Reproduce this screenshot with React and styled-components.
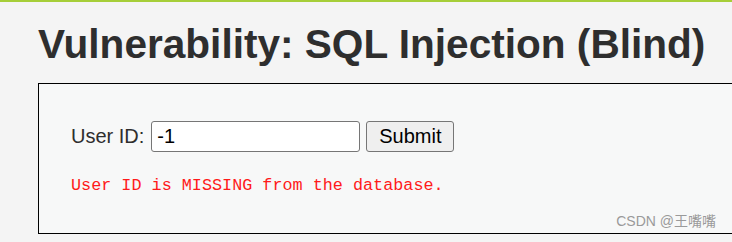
import React from "react";
import styled, { createGlobalStyle } from "styled-components";

const GlobalStyle = createGlobalStyle`
  html, body {
    margin: 0;
    padding: 0;
    background: #f4f4f4;
  }
  body {
    font-family: "Liberation Sans", Arial, sans-serif;
    color: #2e2e2e;
  }
`;

const App = () => {
  return (
    <>
      <GlobalStyle />
      <Page>
        <TopLine />
        <Main>
          <Title>Vulnerability: SQL Injection (Blind)</Title>
          <VulnBox>
            <Form onSubmit={e => e.preventDefault()}>
              <Label>User ID:</Label>
              <TextInput type="text" defaultValue="-1" />
              <SubmitButton type="submit">Submit</SubmitButton>
            </Form>
            <Result>User ID is MISSING from the database.</Result>
            <Watermark>CSDN @王嘴嘴</Watermark>
          </VulnBox>
        </Main>
      </Page>
    </>
  );
};

export default App;

const Page = styled.div`
  width: 732px;
  height: 242px;
  overflow: hidden;
`;

const TopLine = styled.div`
  height: 2px;
  background: #a6ce39;
`;

const Main = styled.div`
  padding-left: 38px;
`;

const Title = styled.h1`
  margin: 0;
  padding-top: 19px;
  font-size: 40.6px;
  line-height: 47px;
  font-weight: bold;
  color: #2e2e2e;
  white-space: nowrap;
`;

const VulnBox = styled.div`
  position: relative;
  margin-top: 15px;
  border: 1px solid #000;
  border-right: none;
  background: #f7f8f8;
  padding: 37px 0 0 32px;
  box-sizing: border-box;
  height: 151px;
`;

const Form = styled.form`
  display: flex;
  align-items: center;
  height: 31px;
`;

const Label = styled.label`
  font-size: 20px;
  color: #2e2e2e;
  margin-right: 7px;
`;

const TextInput = styled.input`
  box-sizing: border-box;
  width: 209px;
  height: 31px;
  margin-right: 6px;
  border: 1px solid #767676;
  border-radius: 3px;
  background: #fff;
  padding: 0 5px;
  font-family: "Liberation Sans", Arial, sans-serif;
  font-size: 20px;
  color: #000;
  outline: none;
`;

const SubmitButton = styled.button`
  box-sizing: border-box;
  width: 88px;
  height: 31px;
  border: 1px solid #767676;
  border-radius: 3px;
  background: #efefef;
  font-family: "Liberation Sans", Arial, sans-serif;
  font-size: 20px;
  color: #000;
  padding: 0;
`;

const Result = styled.pre`
  margin: 25px 0 0;
  font-family: "Liberation Mono", "Courier New", monospace;
  font-size: 16.8px;
  line-height: 18px;
  color: #ff1a1a;
`;

const Watermark = styled.span`
  position: absolute;
  right: 16px;
  bottom: 3px;
  font-family: "Liberation Sans", "Noto Sans CJK SC", sans-serif;
  font-size: 14px;
  color: #9a9a9a;
`;
